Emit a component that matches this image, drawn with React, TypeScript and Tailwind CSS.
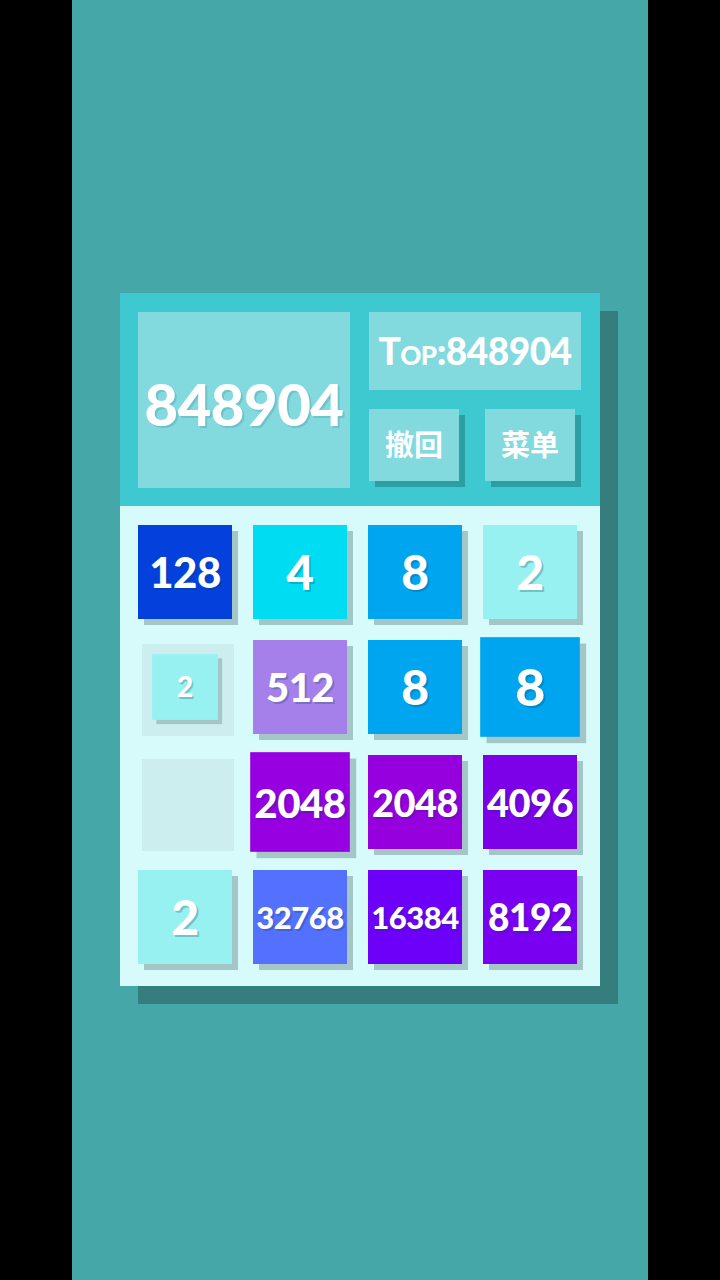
type Cell = {
  v?: number;
  bg?: string;
  size?: string;
  scale?: string;
};

const cells: Cell[] = [
  { v: 128, bg: "bg-[#0340dc]", size: "text-[42px]" },
  { v: 4, bg: "bg-[#00dcf2]", size: "text-[48px]" },
  { v: 8, bg: "bg-[#00a5ef]", size: "text-[48px]" },
  { v: 2, bg: "bg-[#97f1f1]", size: "text-[48px]" },
  { v: 2, bg: "bg-[#97f1f1]", size: "text-[40px]", scale: "scale-[0.7]" },
  { v: 512, bg: "bg-[#a680ea]", size: "text-[40px]" },
  { v: 8, bg: "bg-[#00a5ef]", size: "text-[48px]" },
  { v: 8, bg: "bg-[#00a5ef]", size: "text-[49px]", scale: "scale-[1.06]" },
  {},
  { v: 2048, bg: "bg-[#9700e0]", size: "text-[38px]", scale: "scale-[1.06]" },
  { v: 2048, bg: "bg-[#9600de]", size: "text-[38px]" },
  { v: 4096, bg: "bg-[#7c00e8]", size: "text-[38px]" },
  { v: 2, bg: "bg-[#97f1f1]", size: "text-[48px]" },
  { v: 32768, bg: "bg-[#5470ff]", size: "text-[31px]" },
  { v: 16384, bg: "bg-[#6c00f8]", size: "text-[31px]" },
  { v: 8192, bg: "bg-[#7a00f2]", size: "text-[37px]" },
];

const font = { fontFamily: "Lato, 'Noto Sans CJK SC', sans-serif" };

function Tile({ c }: { c: Cell }) {
  const empty = c.v === undefined;
  return (
    <div className="relative h-[94px] w-[94px]">
      {(empty || c.scale === "scale-[0.7]") && (
        <div className="absolute left-[4px] top-[4px] h-[92px] w-[92px] bg-[#cdeeef]" />
      )}
      {!empty && (
        <div
          className={`absolute inset-0 flex items-center justify-center font-black text-white shadow-[6px_6px_0_#a5c6c7] [text-shadow:2px_2px_0_rgba(0,60,80,0.25)] ${c.bg} ${c.size} ${c.scale ?? ""}`}
        >
          <span className="tracking-[-0.5px]">{c.v}</span>
        </div>
      )}
    </div>
  );
}

export default function App() {
  return (
    <div className="flex min-h-[1280px] w-[720px] justify-center bg-black" style={font}>
      <div className="flex w-[576px] justify-center bg-[#45a7a8] pt-[293px]">
        <div className="h-[693px] w-[480px] shadow-[18px_18px_0_#367d7e]">
          <div className="flex h-[213px] gap-[19px] bg-[#3ec8cf] pl-[18px] pt-[19px]">
            <div className="flex h-[176px] w-[212px] items-center justify-center bg-[#82d9de] pt-[6px] text-[58px] font-black tracking-[-0.5px] text-white [text-shadow:2px_2px_0_rgba(0,80,90,0.15)]">
              848904
            </div>
            <div className="flex w-[212px] flex-col gap-[19px]">
              <div className="flex h-[78px] items-center justify-center bg-[#82d9de] text-[37px] font-black tracking-[-0.5px] text-white [font-variant:small-caps]">
                Top:848904
              </div>
              <div className="flex gap-[26px]">
                <div className="flex h-[72px] w-[90px] items-center justify-center bg-[#82d9de] text-[29px] font-bold text-white shadow-[6px_6px_0_#2d9fa4]">
                  撤回
                </div>
                <div className="flex h-[72px] w-[90px] items-center justify-center bg-[#82d9de] text-[29px] font-bold text-white shadow-[6px_6px_0_#2d9fa4]">
                  菜单
                </div>
              </div>
            </div>
          </div>
          <div className="grid h-[480px] grid-cols-[repeat(4,94px)] grid-rows-[repeat(4,94px)] gap-x-[21px] gap-y-[21px] bg-[#d7fafa] pl-[18px] pt-[19px]">
            {cells.map((c, i) => (
              <Tile key={i} c={c} />
            ))}
          </div>
        </div>
      </div>
    </div>
  );
}
